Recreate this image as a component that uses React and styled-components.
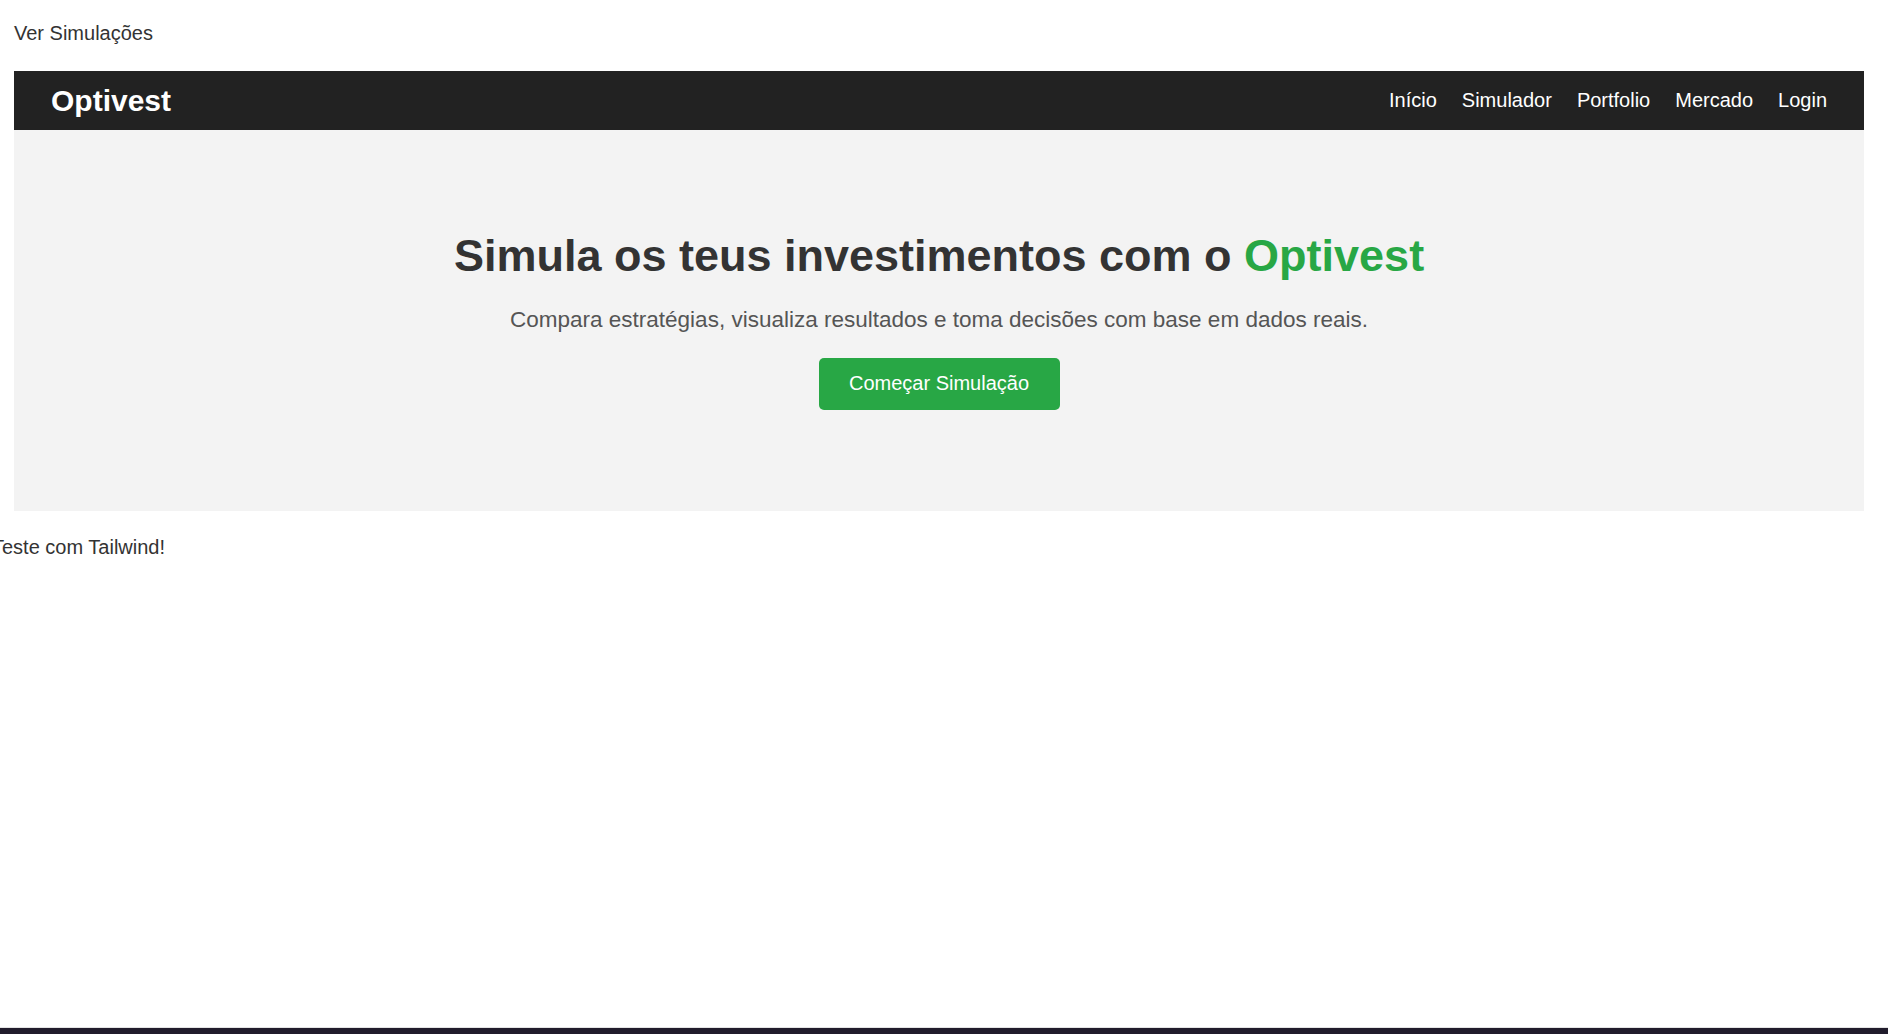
import React from 'react';
import styled, {createGlobalStyle} from 'styled-components';

const GlobalStyle = createGlobalStyle`
    body {
        margin: 0;
        font-family: "Liberation Sans", Arial, sans-serif;
        background: #fff;
        color: #333;
    }
`;

const Page = styled.div`
    min-height: 100vh;
    display: flex;
    flex-direction: column;
`;

const Content = styled.div`
    padding: 0 24px 0 14px;
`;

const TopLink = styled.div`
    padding-top: 22px;
    margin-bottom: 26px;
    font-size: 20px;
    line-height: 23px;
    color: #333;
`;

const Navbar = styled.nav`
    height: 59px;
    background: #222;
    display: flex;
    align-items: center;
    justify-content: space-between;
    padding: 0 37px;
`;

const Logo = styled.div`
    color: #fff;
    font-size: 30px;
    font-weight: bold;
`;

const NavLinks = styled.ul`
    display: flex;
    gap: 25px;
    list-style: none;
    margin: 0;
    padding: 0;
`;

const NavLink = styled.li`
    color: #fff;
    font-size: 20px;
`;

const Hero = styled.section`
    background: #f3f3f3;
    padding: 100px 20px 101px;
    display: flex;
    flex-direction: column;
    align-items: center;
    text-align: center;
`;

const Title = styled.h1`
    margin: 0;
    font-size: 45px;
    line-height: 1.15;
    font-weight: bold;
    color: #333;
`;

const Accent = styled.span`
    color: #28a745;
`;

const Subtitle = styled.p`
    margin: 25px 0 25px;
    font-size: 22.5px;
    line-height: 1.15;
    color: #555;
`;

const StartButton = styled.button`
    height: 52px;
    width: 241px;
    border: none;
    border-radius: 5px;
    background: #28a745;
    color: #fff;
    font-family: inherit;
    font-size: 20px;
    cursor: pointer;
`;

const Note = styled.p`
    margin: 25px 0 0 -8px;
    font-size: 20px;
    line-height: 23px;
    color: #333;
`;

const Taskbar = styled.div`
    margin-top: auto;
    height: 6px;
    border-top: 1px solid #e4e4e4;
    background: #211c2c;
`;

const navItems = ['Início', 'Simulador', 'Portfolio', 'Mercado', 'Login'];

export default function App() {
    return (
        <Page>
            <GlobalStyle/>
            <Content>
                <TopLink>Ver Simulações</TopLink>
                <Navbar>
                    <Logo>Optivest</Logo>
                    <NavLinks>
                        {navItems.map(item => (
                            <NavLink key={item}>{item}</NavLink>
                        ))}
                    </NavLinks>
                </Navbar>
                <Hero>
                    <Title>
                        Simula os teus investimentos com o <Accent>Optivest</Accent>
                    </Title>
                    <Subtitle>
                        Compara estratégias, visualiza resultados e toma decisões com base em dados reais.
                    </Subtitle>
                    <StartButton>Começar Simulação</StartButton>
                </Hero>
            </Content>
            <Note>Teste com Tailwind!</Note>
            <Taskbar/>
        </Page>
    );
}
